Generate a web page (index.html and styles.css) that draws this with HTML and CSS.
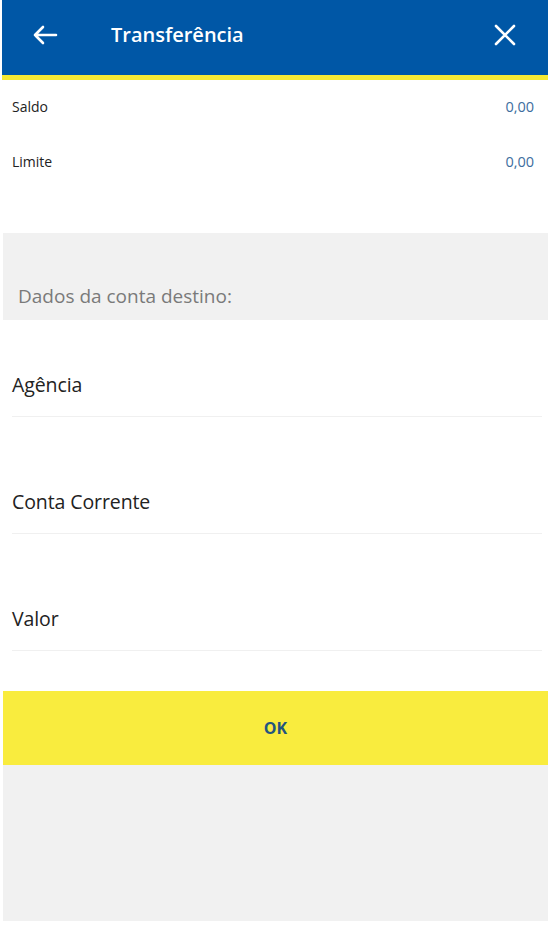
FILE: index.html
```html
<!DOCTYPE html>
<html lang="pt">
<head>
<meta charset="utf-8">
<title>Transferência</title>
<link rel="stylesheet" href="styles.css">
</head>
<body>
<div class="app">
  <header class="topbar">
    <button class="icon-btn back" aria-label="Voltar">
      <svg width="26" height="22" viewBox="0 0 26 22" fill="none" stroke="#fff" stroke-width="2.6" stroke-linecap="round" stroke-linejoin="round"><path d="M24 11H3M11 3L3 11l8 8"/></svg>
    </button>
    <h1 class="title">Transferência</h1>
    <button class="icon-btn close" aria-label="Fechar">
      <svg width="22" height="22" viewBox="0 0 22 22" fill="none" stroke="#fff" stroke-width="2.6" stroke-linecap="round"><path d="M2 2l18 18M20 2L2 20"/></svg>
    </button>
  </header>

  <section class="balances">
    <div class="balance-row"><span class="b-label">Saldo</span><span class="b-value">0,00</span></div>
    <div class="balance-row"><span class="b-label">Limite</span><span class="b-value">0,00</span></div>
  </section>

  <div class="section-head">Dados da conta destino:</div>

  <section class="fields">
    <div class="field first">Agência</div>
    <div class="field">Conta Corrente</div>
    <div class="field">Valor</div>
  </section>

  <button class="ok-btn">OK</button>

  <div class="footer-fill"></div>
</div>
</body>
</html>
```

FILE: styles.css
```css
* { box-sizing: border-box; }
html, body { margin: 0; padding: 0; background: #fff; }
body {
  font-family: "Open Sans", "Liberation Sans", sans-serif;
  color: #222;
}
.app {
  width: 546px;
  margin-left: 2px;
  display: flex;
  flex-direction: column;
}
.topbar {
  height: 80px;
  background: #0057a6;
  border-bottom: 5px solid #f7e934;
  display: flex;
  align-items: center;
}
.icon-btn {
  background: none;
  border: 0;
  padding: 0;
  display: flex;
  align-items: center;
  justify-content: center;
}
.back { width: 26px; margin-left: 30px; margin-top: -6px; }
.close { width: 22px; margin-left: auto; margin-right: 32px; margin-top: -6px; }
.title {
  margin: -6px 0 0 53px;
  font-size: 20px;
  font-weight: 600;
  color: #fff;
}
.balances { padding: 0 14px 0 10px; margin-bottom: 43px; }
.balance-row {
  height: 55px;
  display: flex;
  align-items: center;
  justify-content: space-between;
  font-size: 14px;
  padding-bottom: 2px;
}
.b-label { color: #222; }
.b-value { color: #3d6e9e; font-size: 14.5px; }
.section-head {
  height: 87px;
  background: #f1f1f1;
  color: #7a7a7a;
  font-size: 19px;
  padding: 50px 0 0 15px;
  margin-left: 1px;
}
.fields { padding: 0 6px 0 10px; }
.field {
  padding: 73px 0 19px 0;
  line-height: 24px;
  font-size: 19.5px;
  color: #222;
  border-bottom: 1px solid #f0f0f0;
  letter-spacing: -0.1px;
}
.field.first { padding-top: 53px; }
.ok-btn {
  margin-top: 40px;
  height: 74px;
  border: 0;
  background: #f9ec3e;
  color: #23557e;
  font-family: "Open Sans", "Liberation Sans", sans-serif;
  font-weight: 700;
  font-size: 16px;
  padding: 0;
  margin-left: 1px;
}
.footer-fill {
  height: 156px;
  background: #f1f1f1;
  margin-left: 1px;
}
```
